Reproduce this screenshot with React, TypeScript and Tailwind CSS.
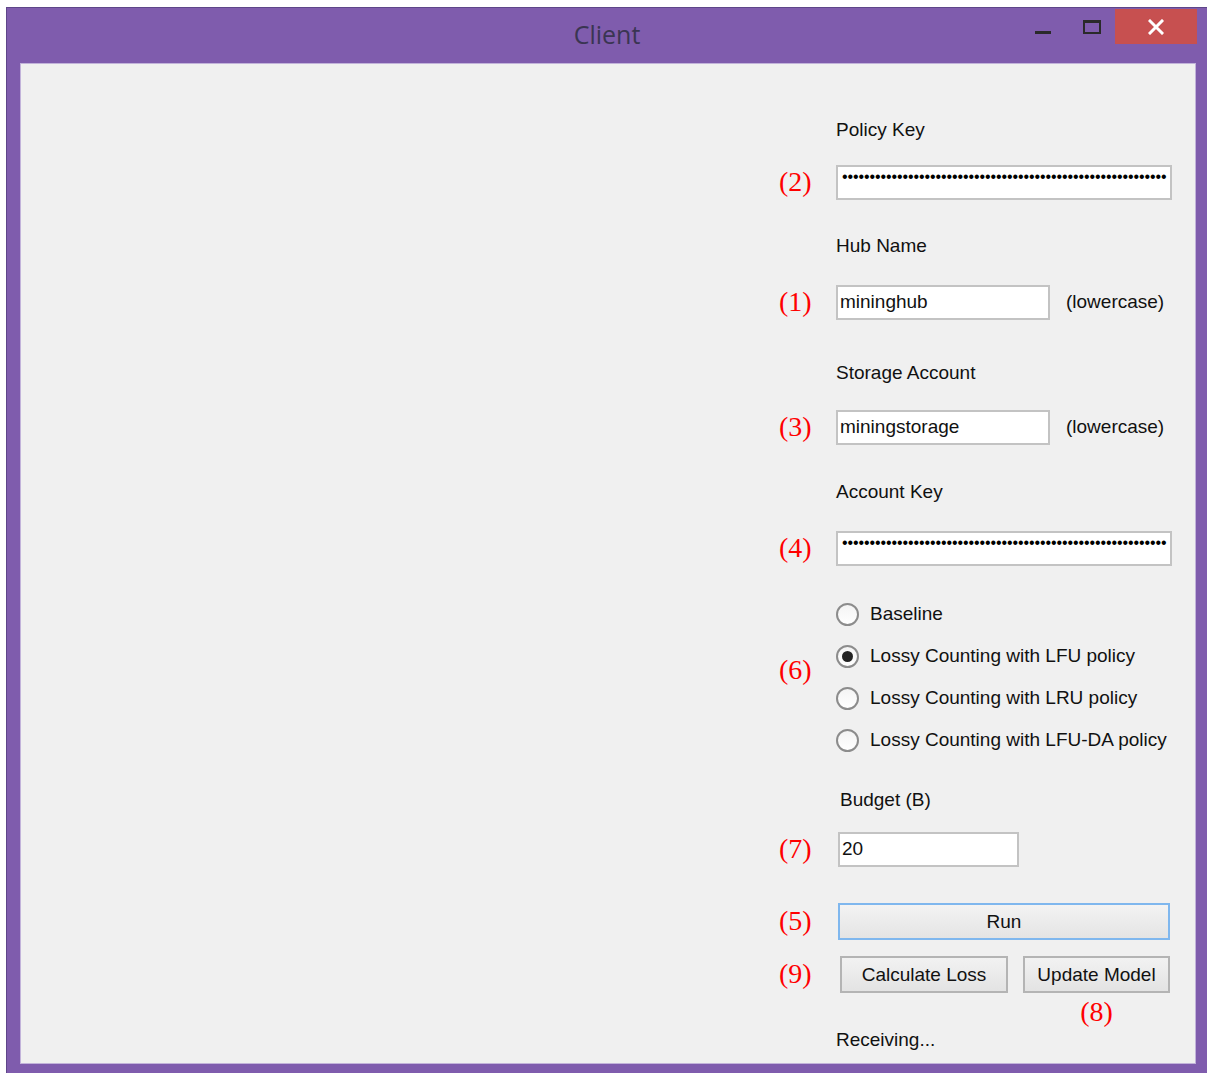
import React from 'react';

const ui = { fontFamily: '"Liberation Sans", Arial, sans-serif' };
const serif = { fontFamily: '"Liberation Serif", "Times New Roman", serif' };

const Tag: React.FC<{ n: string }> = ({ n }) => (
  <span className="text-[28px] leading-none text-[#ff0000]" style={serif}>
    ({n})
  </span>
);

const Label: React.FC<{ text: string; mt: string; pl?: string }> = ({ text, mt, pl = 'pl-[57px]' }) => (
  <div className={`${mt} ${pl} h-[24px] flex items-center text-[19px] text-[#111]`}>{text}</div>
);

// masked key field, dots packed edge to edge
const Masked: React.FC = () => (
  <div className="h-[35px] w-[336px] border-2 border-[#c3c3c3] bg-white flex items-start pl-[4px] pt-[2px] overflow-hidden">
    <span className="text-[16px] leading-[16px] tracking-[-0.1px] text-black whitespace-nowrap">
      {'•'.repeat(59)}
    </span>
  </div>
);

const TextBox: React.FC<{ value: string; w: string }> = ({ value, w }) => (
  <div className={`h-[35px] ${w} border-2 border-[#c3c3c3] bg-white flex items-center pl-[2px] text-[19px] text-[#111]`}>
    {value}
  </div>
);

const Radio: React.FC<{ label: string; checked?: boolean }> = ({ label, checked }) => (
  <div className="h-[42px] flex items-center gap-[11px]">
    <span className="w-[23px] h-[23px] rounded-full border-2 border-[#8c8c8c] bg-gradient-to-b from-[#f4f4f4] to-white flex items-center justify-center">
      {checked && <span className="w-[11px] h-[11px] rounded-full bg-[#222]" />}
    </span>
    <span className="text-[19px] text-[#111]">{label}</span>
  </div>
);

const App: React.FC = () => {
  return (
    <div className="min-h-screen bg-white pt-[7px] pl-[6px]" style={ui}>
      {/* Window frame */}
      <div className="h-[1066px] bg-[#7f5cad] border-t border-l border-[#5e4689] flex flex-col">
        {/* Title bar */}
        <div className="h-[55px] grid grid-cols-[1fr_auto_1fr]">
          <div />
          <div className="flex items-center pb-[1px] text-[25px] text-[#3a3552]" style={{ fontFamily: '"Open Sans", sans-serif' }}>
            Client
          </div>
          <div className="flex justify-end items-start pr-[10px]">
            <div className="mt-[23px] w-[16px] h-[3px] bg-[#2a2a2a]" />
            <div className="mt-[12px] ml-[32px] w-[18px] h-[14px] border-2 border-t-[3px] border-[#2a2a2a]" />
            <div className="mt-[1px] ml-[14px] w-[82px] h-[35px] bg-[#c75050] flex items-center justify-center">
              <svg width="16" height="16" viewBox="0 0 16 16">
                <path d="M2 2 L14 14 M14 2 L2 14" stroke="#fff" strokeWidth="3" strokeLinecap="square" />
              </svg>
            </div>
          </div>
        </div>

        {/* Client area */}
        <div className="ml-[13px] mr-[11px] h-[1001px] bg-[#f0f0f0] border border-[#c2b3da] pl-[758px]">
          <div className="flex flex-col">
            <Label text="Policy Key" mt="mt-[54px]" />
            <div className="mt-[23px] flex items-center">
              <div className="w-[57px]"><Tag n="2" /></div>
              <Masked />
            </div>

            <Label text="Hub Name" mt="mt-[34px]" />
            <div className="mt-[27px] flex items-center">
              <div className="w-[57px]"><Tag n="1" /></div>
              <TextBox value="mininghub" w="w-[214px]" />
              <span className="ml-[16px] text-[19px] text-[#111]">(lowercase)</span>
            </div>

            <Label text="Storage Account" mt="mt-[41px]" />
            <div className="mt-[25px] flex items-center">
              <div className="w-[57px]"><Tag n="3" /></div>
              <TextBox value="miningstorage" w="w-[214px]" />
              <span className="ml-[16px] text-[19px] text-[#111]">(lowercase)</span>
            </div>

            <Label text="Account Key" mt="mt-[35px]" />
            <div className="mt-[27px] flex items-center">
              <div className="w-[57px]"><Tag n="4" /></div>
              <Masked />
            </div>

            {/* Caching policy options */}
            <div className="mt-[27px] flex">
              <div className="w-[57px] flex items-center pb-[14px]"><Tag n="6" /></div>
              <div className="flex flex-col">
                <Radio label="Baseline" />
                <Radio label="Lossy Counting with LFU policy" checked />
                <Radio label="Lossy Counting with LRU policy" />
                <Radio label="Lossy Counting with LFU-DA policy" />
              </div>
            </div>

            <Label text="Budget (B)" mt="mt-[27px]" pl="pl-[61px]" />
            <div className="mt-[20px] flex items-center">
              <div className="w-[59px]"><Tag n="7" /></div>
              <TextBox value="20" w="w-[181px]" />
            </div>

            <div className="mt-[36px] flex items-center">
              <div className="w-[59px]"><Tag n="5" /></div>
              <button className="h-[37px] w-[332px] pt-[2px] border-2 border-[#7fb7ee] bg-gradient-to-b from-[#f3f3f3] to-[#e4e4e4] text-[19px] text-[#111]">
                Run
              </button>
            </div>

            <div className="mt-[16px] flex items-center">
              <div className="w-[61px]"><Tag n="9" /></div>
              <button className="h-[37px] w-[168px] pt-[2px] border-2 border-[#b4b4b4] bg-gradient-to-b from-[#f2f2f2] to-[#e3e3e3] text-[19px] text-[#111]">
                Calculate Loss
              </button>
              <button className="ml-[15px] h-[37px] w-[147px] pt-[2px] border-2 border-[#b4b4b4] bg-gradient-to-b from-[#f2f2f2] to-[#e3e3e3] text-[19px] text-[#111]">
                Update Model
              </button>
            </div>

            <div className="mt-[7px] h-[24px] flex items-center">
              <div className="w-[244px]" />
              <div className="w-[147px] flex justify-center"><Tag n="8" /></div>
            </div>

            <Label text="Receiving..." mt="mt-[4px]" />
          </div>
        </div>
      </div>
    </div>
  );
};

export default App;
